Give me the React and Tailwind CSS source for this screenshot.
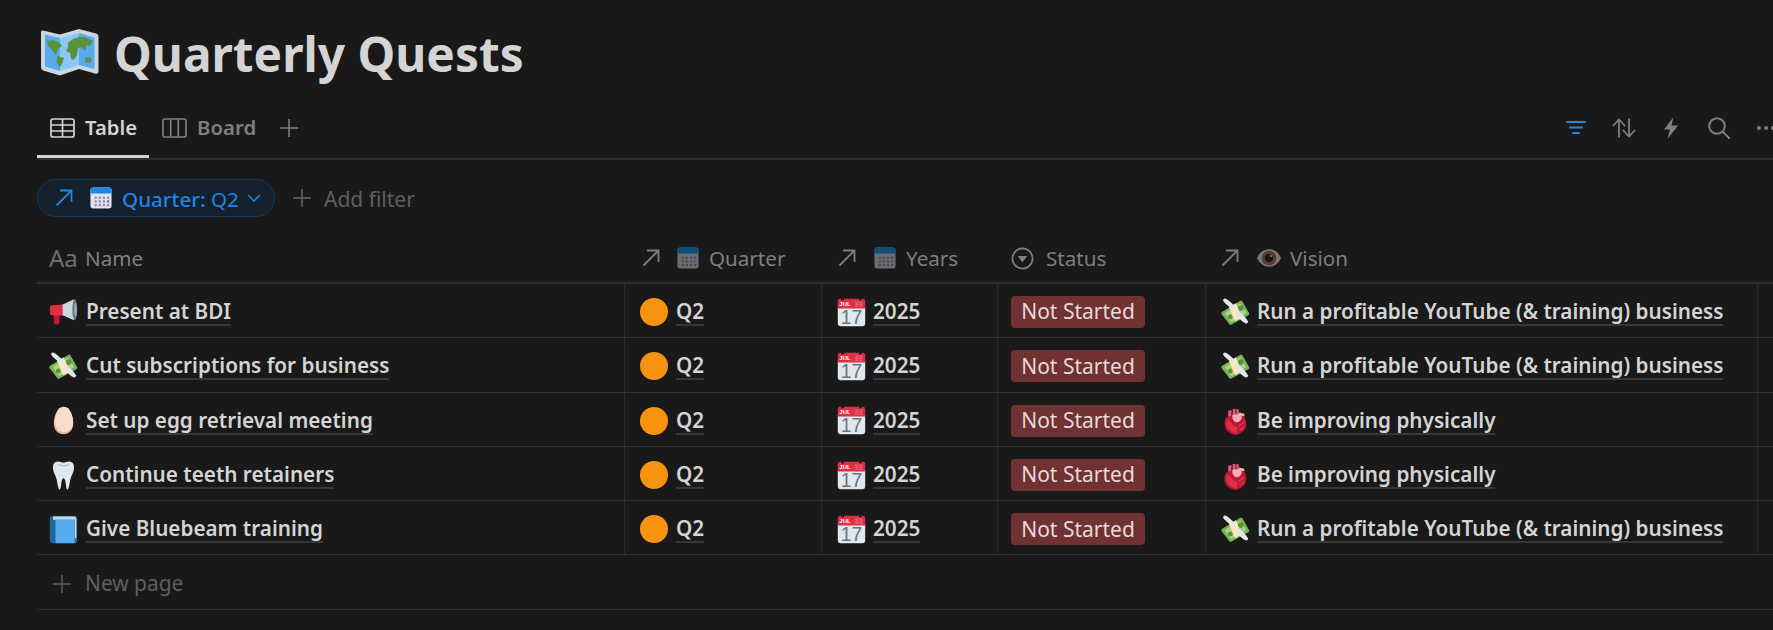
import React from 'react';

const font = 'font-["Noto_Sans","Liberation_Sans",sans-serif]';

const MapEmoji = () => (
  <svg viewBox="0 0 58 47" className="w-[58px] h-[47px] shrink-0">
    <path d="M2 1.5 L19 5.5 L38 0 L55 4.5 Q57.5 5 57.5 8 L57.5 42 Q57.5 45.5 54 44.5 L38 40 L19 46.5 L2 41.5 Q0 41 0 38 L0 3.5 Q0 1 2 1.5 Z" fill="#ccd6dd" />
    <path d="M4 5.5 L19 9 L19 42 L4 37.5 Z" fill="#55acee" />
    <path d="M19 9 L38 4 L38 36 L19 42 Z" fill="#88c9f9" />
    <path d="M38 4 L53.5 8.5 L53.5 40 L38 36 Z" fill="#55acee" />
    <path d="M6 12 L12 11 L19 14 L21 17 L17 20 L15 26 L11 21 L7 17 Z" fill="#5c913b" />
    <path d="M16 27 L23 29 L21 35 L18 39 L16 33 Z" fill="#5c913b" />
    <path d="M27 14 L32 10 L38 8 L44 8 L52 12 L49 17 L46 16 L44 22 L40 18 L37 19 L36 26 L33 31 L30 30 L29 24 L25 22 L27 18 Z" fill="#5c913b" />
    <path d="M44 29 L49 28 L51 32 L47 34 L44 33 Z" fill="#5c913b" />
  </svg>
);

const Megaphone = () => (
  <svg viewBox="0 0 36 36" className="w-[29px] h-[29px] shrink-0">
    <path d="M5.5 20 L13 20 L13 30 Q13 33 9.5 33 Q6 33 6 30 Z" fill="#be1931" />
    <path d="M4 9 L18 8 L18 22 L4 21.5 Q1 21.5 1 18 L1 12.5 Q1 9 4 9 Z" fill="#dd2e44" />
    <path d="M17 8 L31 1.5 L31 27.5 L17 21.5 Z" fill="#ccd6dd" />
    <ellipse cx="32" cy="14.5" rx="3" ry="13" fill="#66757f" />
    <ellipse cx="33" cy="14.5" rx="1.5" ry="9" fill="#99aab5" />
  </svg>
);

const MoneyWings = () => (
  <svg viewBox="0 0 36 36" className="w-[29px] h-[29px] shrink-0">
    <path d="M1 17.5 L24 3.5 Q25.5 2.5 26.5 4 L35 19 Q35.5 20.5 34 21.5 L13 33 Q11.5 34 10.5 32.5 L0.5 20 Q0 18.5 1 17.5 Z" fill="#77b255" />
    <path d="M4.5 18.5 L24 6.5 L31.5 19 L12.5 30 Z" fill="#a7d28b" />
    <circle cx="24.5" cy="12.5" r="3.5" fill="#5c913b" />
    <circle cx="11.5" cy="23.5" r="3" fill="#5c913b" />
    <path d="M10 11.5 L18.5 6.5 L25.5 24.5 L17.5 29 Z" fill="#ffe8b6" />
    <path d="M2.5 3 Q3 0 6 1 Q10 3 18 11 Q19.5 13 17 14.5 Q15 15 13 13 Q4 6 2.5 3 Z" fill="#e1e8ed" />
    <path d="M19.5 17.5 Q21.5 16 24 18 Q31 24 33.5 29 Q34 32 31 31.5 Q26 30 20 22 Q18.5 19.5 19.5 17.5 Z" fill="#e1e8ed" />
  </svg>
);

const Egg = () => (
  <svg viewBox="0 0 36 36" className="w-[29px] h-[29px] shrink-0">
    <path d="M18 1 C26 1 30 13 30 21 C30 30 25 35 18 35 C11 35 6 30 6 21 C6 13 10 1 18 1 Z" fill="#e8b796" />
    <path d="M18.5 1 C26 1 30 13 30 20.5 C30 28 25 32.5 19.5 32.5 C12 32.5 7.5 28 7.5 20 C7.5 12 11.5 1 18.5 1 Z" fill="#f9dcc9" />
  </svg>
);

const Tooth = () => (
  <svg viewBox="0 0 36 36" className="w-[29px] h-[29px] shrink-0">
    <path d="M11 .5 C14 .5 16 2 18 2 C20 2 22 .5 25 .5 C30 .5 31.5 5 31 10 C30.5 15 27.5 18 26.5 23 C25.5 28 24.5 35.5 23 35.5 C21.5 35.5 21 30 20.5 26 C20 23 19 21.5 18 21.5 C17 21.5 16 23 15.5 26 C15 30 14.5 35.5 13 35.5 C11.5 35.5 10.5 28 9.5 23 C8.5 18 5.5 15 5 10 C4.5 5 6 .5 11 .5 Z" fill="#e1e8ed" />
    <path d="M11 4.5 Q18 8 25 4.5" fill="none" stroke="#99aab5" strokeWidth="1" />
  </svg>
);

const BlueBook = () => (
  <svg viewBox="0 0 36 36" className="w-[29px] h-[29px] shrink-0">
    <rect x="1" y="1" width="34" height="34" rx="4" fill="#226699" />
    <path d="M5 2 H31 Q34 2 34 5 V29 H32 V6 H5 Z" fill="#ccd6dd" />
    <path d="M8 6 H32 V35 H8 Z" fill="#55acee" />
  </svg>
);

const Calendar17 = () => (
  <svg viewBox="0 0 36 36" className="w-[29px] h-[29px] shrink-0">
    <path d="M1 11 H35 V32 Q35 35 32 35 H4 Q1 35 1 32 Z" fill="#e1e8ed" />
    <path d="M4 1 H32 Q35 1 35 4 V13 H1 V4 Q1 1 4 1 Z" fill="#dd2e44" />
    <circle cx="7" cy="1.5" r="1.6" fill="#191919" />
    <circle cx="29" cy="1.5" r="1.6" fill="#191919" />
    <text x="10" y="10.5" textAnchor="middle" fontSize="7.5" fontWeight="700" fill="#ffffff" fontFamily="Liberation Sans">JUL</text>
    <path d="M22 5 H32 M22 7.5 H32 M22 10 H32" stroke="#f4abba" strokeWidth="1" strokeDasharray="1 .6" />
    <text x="18" y="32.5" textAnchor="middle" fontSize="24" fill="#66757f" fontFamily="Liberation Sans">17</text>
  </svg>
);

const Heart = () => (
  <svg viewBox="0 0 36 36" className="w-[29px] h-[29px] shrink-0">
    <path d="M9 6 L13 5 L13 14 L9 14 Z M14.5 4 L18 3.5 L18 12 L14.5 12 Z M19 4 L22 4 L22 11 L19 11 Z" fill="#ea596e" />
    <path d="M22 8 L29 9.5 L29 13 L22 12 Z" fill="#f4abba" />
    <path d="M7 14 C13 11 26 11 29 14 C32 18 32 24 30 28 C27 33 21 36 18 36 C10 35 5 30 4.5 24 C4 19 5 16 7 14 Z" fill="#be1931" />
    <path d="M14 11 L24 10 L26 14 C25 19 21 21 18 20 C15 19 14 15 14 11 Z" fill="#f4abba" />
    <path d="M9 16 C13 22 17 26 21 26 L19 34 C13 33 7 28 6.5 22 Z" fill="#dd2e44" />
    <path d="M22 25 L29 20 M23 30 L29 26" stroke="#ea596e" strokeWidth="1" fill="none" />
  </svg>
);

const EyeEmoji = () => (
  <svg viewBox="0 0 36 36" className="w-[24px] h-[24px] shrink-0">
    <path d="M0 18 C4 9 11 5 18 5 C25 5 32 9 36 18 C32 27 25 31 18 31 C11 31 4 27 0 18 Z" fill="#767676" />
    <circle cx="18" cy="18" r="11" fill="#5a3b2c" />
    <circle cx="18" cy="18" r="6" fill="#191412" />
    <circle cx="21" cy="15" r="2" fill="#6a6a6a" />
  </svg>
);

const CalendarGrid = ({ top, body, dot, accent, className }) => (
  <svg viewBox="0 0 24 24" className={className}>
    <rect x="0.5" y="0.5" width="23" height="23" rx="3" fill={body} />
    <path d="M3.5 0.5 H20.5 Q23.5 0.5 23.5 3.5 V7 H0.5 V3.5 Q0.5 0.5 3.5 0.5 Z" fill={top} />
    {[10.5, 14.5, 18.5].map((y) =>
      [5, 9.5, 14, 18.5].map((x) => (
        <rect key={`${x}-${y}`} x={x} y={y} width="2.4" height="2.4" fill={x === 18.5 && y === 14.5 ? accent : dot} />
      ))
    )}
  </svg>
);

const RelationArrow = ({ className }) => (
  <svg viewBox="0 0 18 18" fill="none" stroke="currentColor" strokeWidth="1.8" className={className}>
    <path d="M1.5 16.5 L16 2 M5 1.5 H16.5 V13" />
  </svg>
);

const Plus = ({ className }) => (
  <svg viewBox="0 0 18 18" fill="none" stroke="currentColor" strokeWidth="1.5" className={className}>
    <path d="M9 0 V18 M0 9 H18" />
  </svg>
);

const Linked = ({ children }) => (
  <span className="text-[20.7px] leading-[26px] font-semibold text-[#d4d4d4] border-b-2 border-[#373737] whitespace-nowrap">
    {children}
  </span>
);

const businessVision = { icon: <MoneyWings />, text: 'Run a profitable YouTube (& training) business' };
const physicalVision = { icon: <Heart />, text: 'Be improving physically' };

const rows = [
  { icon: <Megaphone />, name: 'Present at BDI', vision: businessVision },
  { icon: <MoneyWings />, name: 'Cut subscriptions for business', vision: businessVision },
  { icon: <Egg />, name: 'Set up egg retrieval meeting', vision: physicalVision },
  { icon: <Tooth />, name: 'Continue teeth retainers', vision: physicalVision },
  { icon: <BlueBook />, name: 'Give Bluebeam training', vision: businessVision },
];

const dimCalendar = { top: '#0f5078', body: '#6c6c72', dot: '#4a4a50', accent: '#0f6aa0' };

const HeaderCell = ({ className, children }) => (
  <div className={`flex items-center pb-[3px] text-[#7f7f7f] text-[20.6px] ${className}`}>{children}</div>
);

const App = () => {
  return (
    <div className={`w-full h-[630px] bg-[#191919] overflow-hidden ${font}`}>
      <div className="flex items-center h-[48px] mt-[28px] pl-[41px] gap-[15px]">
        <MapEmoji />
        <h1 className="text-[47.8px] leading-[48px] font-bold text-[#d4d4d4] whitespace-nowrap pt-[4px]">Quarterly Quests</h1>
      </div>

      <div className="ml-[37px] mt-[29px] h-[55px] flex items-stretch border-b-2 border-[#2f2f2f]">
        <div className="w-[112px] flex items-center pl-[13px] gap-[10px] pb-[5px] text-[#d4d4d4] border-b-[3px] border-[#d4d4d4]">
          <svg viewBox="0 0 25 20" fill="none" stroke="currentColor" strokeWidth="1.7" className="w-[25px] h-[20px]">
            <rect x="1" y="1" width="23" height="18" rx="2" />
            <path d="M1 7 H24 M1 13 H24 M12.5 1 V19" />
          </svg>
          <span className="text-[20.3px] font-semibold">Table</span>
        </div>
        <div className="flex items-center pl-[13px] gap-[10px] pb-[8px] text-[#7f7f7f]">
          <svg viewBox="0 0 25 20" fill="none" stroke="currentColor" strokeWidth="1.7" className="w-[25px] h-[20px]">
            <rect x="1" y="1" width="23" height="18" rx="2" />
            <path d="M8.7 1 V19 M16.3 1 V19" />
          </svg>
          <span className="text-[20.4px] font-semibold">Board</span>
        </div>
        <div className="flex items-center pb-[8px] ml-[24px] text-[#7f7f7f]">
          <Plus className="w-[18px] h-[18px]" />
        </div>

        <div className="ml-auto flex items-center pb-[8px]">
          <svg viewBox="0 0 20 15" fill="none" stroke="#2383e2" strokeWidth="2.2" strokeLinecap="round" className="w-[20px] h-[15px] mr-[26px]">
            <path d="M1 2 H19 M4 7.5 H16 M7 13 H13" />
          </svg>
          <svg viewBox="0 0 24 20" fill="none" stroke="#7f7f7f" strokeWidth="1.8" className="w-[24px] h-[20px] mr-[28px]">
            <path d="M7 19.5 V1.5 M1 8 L7 1.5 L13 8 M17 .5 V18.5 M11 12 L17 18.5 L23 12" />
          </svg>
          <svg viewBox="0 0 14 22" className="w-[14px] h-[22px] mr-[30px]">
            <path d="M9.5 0 L0 12.5 H6 L3.5 22 L14 8.5 H7.5 Z" fill="#7f7f7f" />
          </svg>
          <svg viewBox="0 0 22 22" fill="none" stroke="#7f7f7f" strokeWidth="2" strokeLinecap="round" className="w-[22px] h-[22px] mr-[27px]">
            <circle cx="9" cy="9" r="7.8" />
            <path d="M14.5 14.5 L21 21" />
          </svg>
          <div className="flex gap-[3px] w-[16px]">
            <span className="w-[4px] h-[4px] rounded-full bg-[#7f7f7f] shrink-0" />
            <span className="w-[4px] h-[4px] rounded-full bg-[#7f7f7f] shrink-0" />
            <span className="w-[4px] h-[4px] rounded-full bg-[#7f7f7f] shrink-0" />
          </div>
        </div>
      </div>

      <div className="ml-[37px] mt-[19px] h-[38px] flex items-center">
        <div className="w-[238px] h-[38px] flex items-center rounded-full bg-[#14202c] border border-[#173a5a] text-[#2383e2] pl-[17px]">
          <RelationArrow className="w-[18px] h-[18px]" />
          <CalendarGrid top="#1e88e5" body="#e6e0f0" dot="#8f8aa0" accent="#1e88e5" className="w-[22px] h-[22px] ml-[17px]" />
          <span className="text-[20.6px] ml-[10px] mt-[2px] whitespace-nowrap"><span className="font-medium">Quarter:</span> Q2</span>
          <svg viewBox="0 0 14 8" fill="none" stroke="currentColor" strokeWidth="1.6" className="w-[14px] h-[8px] ml-[8px]">
            <path d="M1 1 L7 7 L13 1" />
          </svg>
        </div>
        <Plus className="w-[18px] h-[18px] ml-[18px] text-[#666666]" />
        <span className="text-[21px] ml-[13px] mt-[4px] text-[#5f5f5f]">Add filter</span>
      </div>

      <div className="ml-[37px] mt-[20px]">
        <div className="flex h-[47px] border-b-2 border-[#2f2f2f]">
          <HeaderCell className="w-[587px] pl-[12px]">
            <span className="text-[#6f6f6f] text-[24px] w-[36px]">Aa</span>
            <span>Name</span>
          </HeaderCell>
          <HeaderCell className="w-[197px] pl-[18px]">
            <RelationArrow className="w-[18px] h-[18px]" />
            <CalendarGrid {...dimCalendar} className="w-[22px] h-[22px] ml-[17px]" />
            <span className="ml-[10px]">Quarter</span>
          </HeaderCell>
          <HeaderCell className="w-[176px] pl-[17px]">
            <RelationArrow className="w-[18px] h-[18px]" />
            <CalendarGrid {...dimCalendar} className="w-[22px] h-[22px] ml-[18px]" />
            <span className="ml-[10px]">Years</span>
          </HeaderCell>
          <HeaderCell className="w-[208px] pl-[14px]">
            <svg viewBox="0 0 24 24" fill="none" className="w-[23px] h-[23px]">
              <circle cx="12" cy="12" r="10.5" stroke="currentColor" strokeWidth="1.8" />
              <path d="M7 9.5 H17 L12 16 Z" fill="currentColor" />
            </svg>
            <span className="ml-[12px]">Status</span>
          </HeaderCell>
          <HeaderCell className="w-[552px] pl-[16px]">
            <RelationArrow className="w-[18px] h-[18px]" />
            <span className="ml-[18px]"><EyeEmoji /></span>
            <span className="ml-[9px]">Vision</span>
          </HeaderCell>
          <div className="flex-1" />
        </div>

        {rows.map((row) => (
          <div key={row.name} className="flex h-[54.3px] border-b border-[#2f2f2f]">
            <div className="w-[587px] flex items-center pl-[12px] gap-[8px] pt-[3px]">
              {row.icon}
              <Linked>{row.name}</Linked>
            </div>
            <div className="w-[197px] flex items-center pl-[15px] gap-[8px] pt-[3px] border-l border-[#2a2a2a]">
              <span className="w-[28px] h-[28px] rounded-full bg-[#f7930e] shrink-0" />
              <Linked>Q2</Linked>
            </div>
            <div className="w-[176px] flex items-center pl-[15px] gap-[7px] pt-[3px] border-l border-[#2a2a2a]">
              <Calendar17 />
              <Linked>2025</Linked>
            </div>
            <div className="w-[208px] flex items-center pl-[13px] pt-[3px] border-l border-[#2a2a2a]">
              <span className="h-[32px] w-[134px] flex items-center justify-center rounded-[4px] bg-[#6f3131] text-[#e6dada] text-[21px] whitespace-nowrap">Not Started</span>
            </div>
            <div className="w-[552px] flex items-center pl-[15px] gap-[7px] pt-[3px] border-l border-[#2a2a2a]">
              {row.vision.icon}
              <Linked>{row.vision.text}</Linked>
            </div>
            <div className="flex-1 border-l border-[#2a2a2a]" />
          </div>
        ))}

        <div className="flex items-center h-[54.4px] pl-[16px] pt-[3px] border-b border-[#2f2f2f] text-[#5f5f5f]">
          <Plus className="w-[18px] h-[18px]" />
          <span className="text-[20.9px] ml-[14px]">New page</span>
        </div>
      </div>
    </div>
  );
};

export default App;
